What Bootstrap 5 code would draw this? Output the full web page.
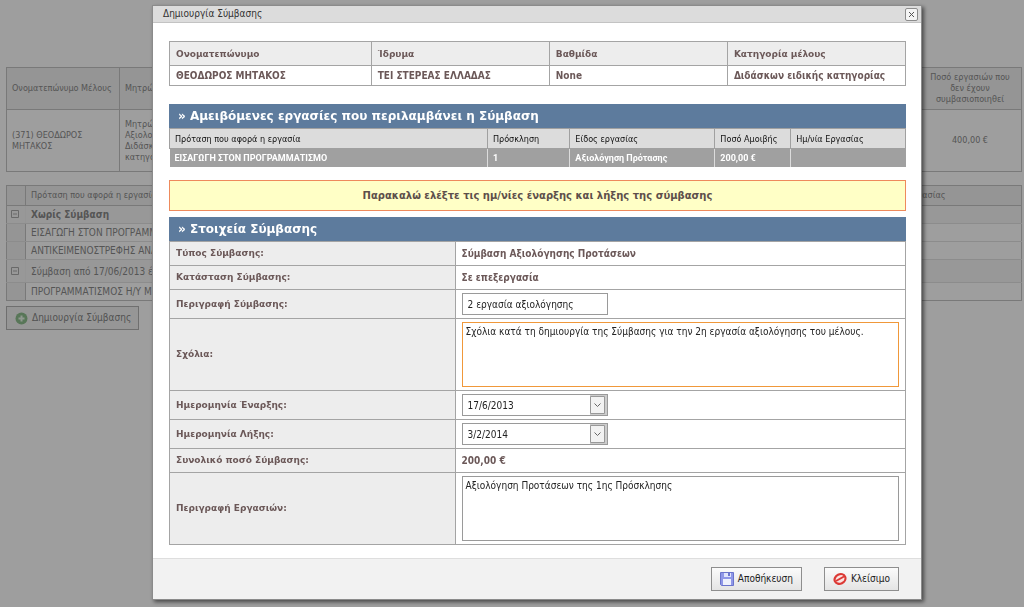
<!DOCTYPE html>
<html lang="el">
<head>
<meta charset="utf-8">
<meta name="viewport" content="width=device-width, initial-scale=1">
<title>Δημιουργία Σύμβασης</title>
<link href="https://cdn.jsdelivr.net/npm/bootstrap@5.3.0/dist/css/bootstrap.min.css" rel="stylesheet">
<style>
  :root { --ui: "DejaVu Sans Condensed", "DejaVu Sans", sans-serif; --wide: "DejaVu Sans", sans-serif; }
  body { font: 10px/11px var(--ui); color: #8a8a8a; background: #fff; overflow: hidden; }
  table { border-collapse: collapse; width: 100%; table-layout: fixed; }
  label { display: block; }

  /* page behind the dialog */
  .page { padding: 67px 2px 0 6px; }
  .page td, .page th { border: 1px solid #c4c4c4; padding: 0 5px; font-weight: 400; }
  .page th { background: #f0f0f0; }
  .members { font-size: 9px; }
  .members th { height: 42px; }
  .members td { height: 62px; }
  .members .narrow { width: 113px; }
  .members .sum { width: 103px; text-align: center; }
  .works { font-size: 9px; margin: 13px 0 5px; white-space: nowrap; }
  .works th { height: 20px; }
  .works td { height: 18px; overflow: hidden; border-color: #e2e2e2 #c4c4c4; font-size: 10px; }
  .works td.works-item { font-size: 10px; }
  .works tr:last-child td { border-bottom-color: #c4c4c4; }
  .works .group td { background: #f6f6f6; border-left-color: #e2e2e2; }
  .works .group td:first-child { border-left-color: #c4c4c4; border-right-color: #f0f0f0; }
  .works .tall td { height: 23px; }
  .works .fold { width: 19px; background: #f0f0f0; padding: 0 4px; }
  .works .dates { width: 149px; }

  .cmd { display: inline-flex; align-items: center; height: 24px; border: 1px solid #8e8e8e; border-radius: 0;
         background: linear-gradient(#fbfbfb, #e4e4e4); font: 10px/14px var(--ui); color: #222; padding: 0 8px; gap: 4px; }
  .cmd-create { width: 133px; color: #858585; border-color: #b4b4b4; background: #f3f3f3; padding-right: 6px; }

  /* dialog */
  .shade { --bs-backdrop-opacity: .38; }
  .modal-dialog { max-width: none; margin: 5px 102px 0 152px; }
  .modal-content { border: 1px solid #8b8b8b; border-radius: 0; box-shadow: 2px 2px 4px rgba(0,0,0,.55); color: #6b5858; }
  .modal-header { height: 17px; background: #dcdcdc; border-bottom: 1px solid #c3c3c3; border-radius: 0; padding: 0 3px 0 10px; }
  .modal-title { font: 10px/16px var(--ui); color: #333; }
  .shut { width: 13px; height: 13px; border: 1px solid #8c8c8c; border-radius: 2px; background: #f4f4f4; padding: 0; display: flex; align-items: center; justify-content: center; }
  .modal-body { padding: 18px 15px 13px 16px; }
  .modal-footer { background: #f2f2f2; border-top: 1px solid #dedede; border-radius: 0; height: 41px; padding: 1px 22px 0; gap: 22px; }
  .modal-footer > * { margin: 0; }

  .person { font-weight: 700; margin-bottom: 18px; }
  .person th, .person td, .details th, .details td { border: 1px solid #a4a4a4; padding: 0 6px; }
  .person th { height: 24px; background: #ededed; font: 700 9px/12px var(--wide); }
  .person td { height: 20px; }
  .band { background: #5d7b9d; color: #fff; font: 700 12px/24px var(--wide); margin: 0; padding: 0 9px; }
  .tasks { margin-bottom: 13px; }
  .tasks th { height: 20px; background: #dcdcdc; border: 1px solid #a0a0a0; color: #111; font: 9px/12px var(--ui); padding: 0 5px; }
  .tasks td { height: 18px; background: #a0a0a0; border: solid #dcdcdc; border-width: 0 1px 0 0; color: #fff; font: 700 9px/12px Roboto, sans-serif; padding: 0 5px; }
  .tasks td:last-child { border-right-color: #a0a0a0; }
  .notice { height: 31px; border: 1px solid #ee8a5c; border-radius: 0; background: #ffffc6; font: 700 10px/30px var(--wide); margin: 0 0 6px; padding: 0; color: #5d4f4b; }
  .details th { height: 24px; background: #ededed; font: 700 9px/12px var(--wide); }
  .details td { font-weight: 700; height: 24px; }
  .details .edit > * { height: 29px; }
  .details .memo > * { height: 72px; }
  .field { display: block; border: 1px solid #9a9a9a; border-radius: 0; background-color: #fff; color: #222; font: 10px/14px var(--ui); outline: 0; }
  .short-field { width: 146px; height: 22px; padding: 2px 5px 0; }
  select.field { appearance: none; background-repeat: no-repeat; background-position: right center;
    background-image: url("data:image/svg+xml,%3Csvg xmlns='http://www.w3.org/2000/svg' width='18' height='20'%3E%3Cpath fill='%23ccc' d='M1 0h17v20H1z'/%3E%3Cpath fill='%23f2f2f2' stroke='%23999' d='M1.500 1.500h14v17h-14z'/%3E%3Cpath fill='none' stroke='%23666' d='M5.500 8.500l3 3 3-3'/%3E%3C/svg%3E"); }
  textarea.field { width: 100%; height: 65px; padding: 2px 3px; resize: none; }
  textarea.active-field { border-color: #f0983a; }
</style>
</head>
<body>
<main class="page">
  <table class="members">
    <thead><tr><th class="narrow">Ονοματεπώνυμο Μέλους</th><th>Μητρώο</th><th class="sum">Ποσό εργασιών που δεν έχουν συμβασιοποιηθεί</th></tr></thead>
    <tbody><tr><td>(371) ΘΕΟΔΩΡΟΣ ΜΗΤΑΚΟΣ</td><td>Μητρώο<br>Αξιολογητών<br>Διδάσκων ειδικής<br>κατηγορίας</td><td class="sum">400,00 €</td></tr></tbody>
  </table>
  <table class="works">
    <thead><tr><th class="fold"></th><th>Πρόταση που αφορά η εργασία</th><th class="dates">Ημ/νία Εργασίας</th></tr></thead>
    <tbody>
      <tr class="group"><td class="fold"><svg class="d-block" width="9" height="9" fill="none" stroke="#aaa"><path d="M.5.5h7v7h-7zM2 4h4"/></svg></td><td colspan="2"><b>Χωρίς Σύμβαση</b></td></tr>
      <tr><td class="fold"></td><td>ΕΙΣΑΓΩΓΗ ΣΤΟΝ ΠΡΟΓΡΑΜΜΑΤΙΣΜΟ</td><td></td></tr>
      <tr><td class="fold"></td><td>ΑΝΤΙΚΕΙΜΕΝΟΣΤΡΕΦΗΣ ΑΝΑΛΥΣΗ</td><td></td></tr>
      <tr class="group tall"><td class="fold"><svg class="d-block" width="9" height="9" fill="none" stroke="#aaa"><path d="M.5.5h7v7h-7zM2 4h4"/></svg></td><td colspan="2">Σύμβαση από 17/06/2013 έως</td></tr>
      <tr><td class="fold"></td><td>ΠΡΟΓΡΑΜΜΑΤΙΣΜΟΣ Η/Υ ΜΕ</td><td></td></tr>
    </tbody>
  </table>
  <button type="button" class="cmd cmd-create">
    <svg width="13" height="13" viewBox="0 0 13 13"><circle cx="6.500" cy="6.500" r="6" fill="#8fbf8f"/><path d="M6.500 3.500v6M3.500 6.500h6" stroke="#e8f5e8" stroke-width="2"/></svg>
    <span>Δημιουργία Σύμβασης</span>
  </button>
</main>

<div class="modal-backdrop show shade"></div>
<div class="modal d-block" role="dialog" aria-modal="true" aria-labelledby="dialogTitle">
  <div class="modal-dialog">
    <form class="modal-content">
      <div class="modal-header">
        <h1 class="modal-title" id="dialogTitle">Δημιουργία Σύμβασης</h1>
        <button type="button" class="shut" aria-label="Κλείσιμο"><svg width="7" height="7" stroke="#555"><path d="M1 1l5 5M6 1L1 6"/></svg></button>
      </div>
      <div class="modal-body">
        <table class="person">
          <colgroup><col style="width:27.4%"><col style="width:24.2%"><col style="width:24.2%"><col></colgroup>
          <thead><tr><th>Ονοματεπώνυμο</th><th>Ίδρυμα</th><th>Βαθμίδα</th><th>Κατηγορία μέλους</th></tr></thead>
          <tbody><tr><td>ΘΕΟΔΩΡΟΣ ΜΗΤΑΚΟΣ</td><td>ΤΕΙ ΣΤΕΡΕΑΣ ΕΛΛΑΔΑΣ</td><td>None</td><td>Διδάσκων ειδικής κατηγορίας</td></tr></tbody>
        </table>

        <h2 class="band">» Αμειβόμενες εργασίες που περιλαμβάνει η Σύμβαση</h2>
        <table class="tasks">
          <colgroup><col style="width:43.2%"><col style="width:11.2%"><col style="width:19.7%"><col style="width:10.3%"><col></colgroup>
          <thead><tr><th>Πρόταση που αφορά η εργασία</th><th>Πρόσκληση</th><th>Είδος εργασίας</th><th>Ποσό Αμοιβής</th><th>Ημ/νία Εργασίας</th></tr></thead>
          <tbody><tr><td>ΕΙΣΑΓΩΓΗ ΣΤΟΝ ΠΡΟΓΡΑΜΜΑΤΙΣΜΟ</td><td>1</td><td>Αξιολόγηση Πρότασης</td><td>200,00 €</td><td></td></tr></tbody>
        </table>

        <div class="alert notice text-center" role="alert">Παρακαλώ ελέξτε τις ημ/νίες έναρξης και λήξης της σύμβασης</div>

        <h2 class="band">» Στοιχεία Σύμβασης</h2>
        <table class="details">
          <colgroup><col style="width:38.8%"><col></colgroup>
          <tbody>
            <tr><th scope="row">Τύπος Σύμβασης:</th><td>Σύμβαση Αξιολόγησης Προτάσεων</td></tr>
            <tr><th scope="row">Κατάσταση Σύμβασης:</th><td>Σε επεξεργασία</td></tr>
            <tr class="edit"><th scope="row"><label for="summary">Περιγραφή Σύμβασης:</label></th><td><input id="summary" class="field short-field" type="text" value="2 εργασία αξιολόγησης"></td></tr>
            <tr class="memo"><th scope="row"><label for="notes">Σχόλια:</label></th><td><textarea id="notes" class="field active-field">Σχόλια κατά τη δημιουργία της Σύμβασης για την 2η εργασία αξιολόγησης του μέλους.</textarea></td></tr>
            <tr class="edit"><th scope="row"><label for="from">Ημερομηνία Έναρξης:</label></th><td><select id="from" class="field short-field"><option>17/6/2013</option></select></td></tr>
            <tr class="edit"><th scope="row"><label for="until">Ημερομηνία Λήξης:</label></th><td><select id="until" class="field short-field"><option>3/2/2014</option></select></td></tr>
            <tr><th scope="row">Συνολικό ποσό Σύμβασης:</th><td>200,00 €</td></tr>
            <tr class="memo"><th scope="row"><label for="tasks">Περιγραφή Εργασιών:</label></th><td><textarea id="tasks" class="field">Αξιολόγηση Προτάσεων της 1ης Πρόσκλησης</textarea></td></tr>
          </tbody>
        </table>
      </div>
      <div class="modal-footer">
        <button type="submit" class="cmd">
          <svg width="14" height="14" viewBox="0 0 14 14"><path d="M.5.5h13v13h-12l-1-1z" fill="#8f97e8" stroke="#6a74cc"/><path d="M4 1h7v4H4z" fill="#dfe4fb"/><path d="M8 1h2v3H8z" fill="#6a74cc"/><path d="M3 7h8v6H3z" fill="#eef1fc"/></svg>
          <span>Αποθήκευση</span>
        </button>
        <button type="button" class="cmd">
          <svg width="14" height="14" viewBox="0 0 14 14"><ellipse cx="7" cy="7" rx="5.600" ry="4.600" transform="rotate(-25 7 7)" fill="#fbe4e2" stroke="#dc3a36" stroke-width="2.200"/><path d="M3 9l8-4.500" stroke="#dc3a36" stroke-width="2"/></svg>
          <span>Κλείσιμο</span>
        </button>
      </div>
    </form>
  </div>
</div>
<script src="https://cdn.jsdelivr.net/npm/bootstrap@5.3.0/dist/js/bootstrap.bundle.min.js"></script>
</body>
</html>
